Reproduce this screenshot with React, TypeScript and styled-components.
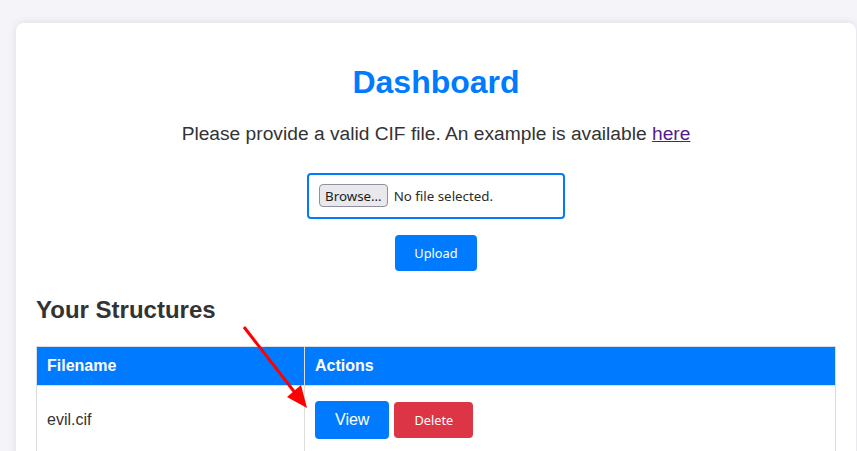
import React from "react";
import styled, { createGlobalStyle } from "styled-components";

const GlobalStyle = createGlobalStyle`
  html, body {
    margin: 0;
    padding: 0;
    background: #f4f4f9;
    font-family: "Liberation Sans", Arial, sans-serif;
    overflow: hidden;
  }
`;

const Page = styled.div`
  position: relative;
  padding: 23px 0 0 16px;
`;

const Card = styled.main`
  width: 840px;
  box-sizing: border-box;
  padding: 20px;
  background: #fff;
  border-radius: 8px;
  box-shadow: 0 0 10px rgba(0, 0, 0, 0.1);
`;

const Title = styled.h1`
  margin: 21.44px 0;
  font-size: 32px;
  font-weight: bold;
  color: #007bff;
  text-align: center;
`;

const Lead = styled.p`
  margin: 0;
  font-size: 19.2px;
  color: #333;
  text-align: center;

  a {
    color: #551a8b;
  }
`;

const UploadForm = styled.form`
  margin-top: 28px;
  display: flex;
  flex-direction: column;
  align-items: center;
  gap: 16px;
`;

const FileBox = styled.div`
  width: 258px;
  height: 46px;
  box-sizing: border-box;
  border: 2px solid #007bff;
  border-radius: 4px;
  padding: 0 10px;
  display: flex;
  align-items: center;
  gap: 6px;
  font-family: "Noto Sans", sans-serif;
  font-size: 13.33px;
  color: #2b2b2b;
`;

const BrowseButton = styled.span`
  display: inline-flex;
  align-items: center;
  height: 23px;
  box-sizing: border-box;
  padding: 0 5px;
  background: #e9e9ed;
  border: 1px solid #8f8f9d;
  border-radius: 4px;
  color: #1b1b1b;
`;

const Button = styled.button<{ $variant?: "primary" | "danger"; $large?: boolean }>`
  border: none;
  border-radius: 4px;
  padding: 10px 20px;
  cursor: pointer;
  color: #fff;
  background: ${(p) => (p.$variant === "danger" ? "#dc3545" : "#007bff")};
  font-family: ${(p) => (p.$large ? '"Liberation Sans", Arial, sans-serif' : '"Noto Sans", sans-serif')};
  font-size: ${(p) => (p.$large ? "16px" : "12.8px")};
  line-height: ${(p) => (p.$large ? "18px" : "16px")};
  vertical-align: middle;
`;

const UploadButton = styled(Button)`
  padding: 10px 19px;
`;

const SectionTitle = styled.h2`
  margin: 25px 0 22px;
  font-size: 24px;
  font-weight: bold;
  color: #333;
`;

const Table = styled.table`
  width: 100%;
  border-collapse: collapse;
`;

const Th = styled.th<{ $w?: number }>`
  ${(p) => (p.$w ? `width: ${p.$w}px;` : "")}
  box-sizing: border-box;
  background: #007bff;
  color: #fff;
  text-align: left;
  font-size: 16px;
  padding: 10px;
  border: 1px solid #ddd;
`;

const Td = styled.td`
  padding: 15px 10px;
  border: 1px solid #ddd;
  font-size: 16px;
  color: #333;
  vertical-align: middle;
`;

const Actions = styled.div`
  display: flex;
  align-items: center;
  gap: 5px;
`;

const Arrow = styled.svg`
  position: absolute;
  left: 0;
  top: 0;
  pointer-events: none;
`;

export default function App() {
  return (
    <>
      <GlobalStyle />
      <Page>
        <Card>
          <Title>Dashboard</Title>
          <Lead>
            Please provide a valid CIF file. An example is available <a href="#">here</a>
          </Lead>
          <UploadForm onSubmit={(e) => e.preventDefault()}>
            <FileBox>
              <BrowseButton>Browse…</BrowseButton>
              <span>No file selected.</span>
            </FileBox>
            <UploadButton type="submit">Upload</UploadButton>
          </UploadForm>
          <SectionTitle>Your Structures</SectionTitle>
          <Table>
            <thead>
              <tr>
                <Th $w={268}>Filename</Th>
                <Th>Actions</Th>
              </tr>
            </thead>
            <tbody>
              <tr>
                <Td>evil.cif</Td>
                <Td>
                  <Actions>
                    <Button $large>View</Button>
                    <Button $variant="danger">Delete</Button>
                  </Actions>
                </Td>
              </tr>
            </tbody>
          </Table>
        </Card>
        <Arrow width="857" height="451" viewBox="0 0 857 451">
          <line x1="244" y1="327" x2="296" y2="394" stroke="#ff0000" strokeWidth="3" />
          <polygon points="307,408 287,397 301,385" fill="#ff0000" />
        </Arrow>
      </Page>
    </>
  );
}
